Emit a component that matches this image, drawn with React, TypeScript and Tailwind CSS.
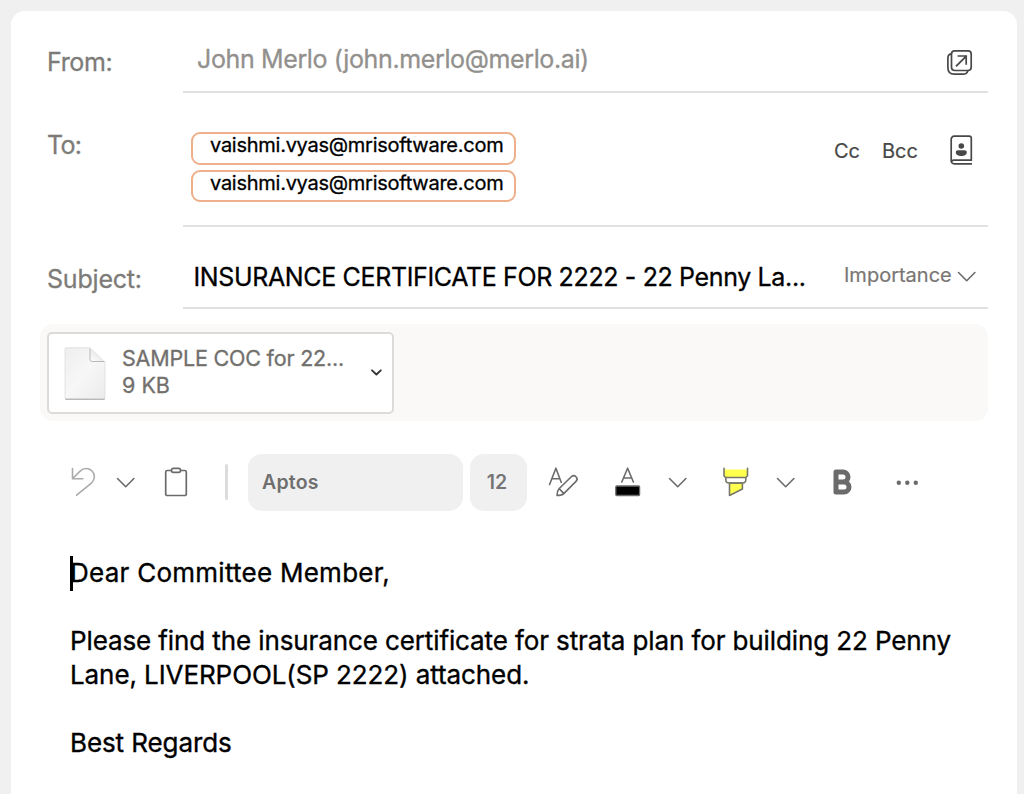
import type { ReactNode } from 'react'

type FieldRowProps = {
  label: string
  labelClass: string
  className: string
  children: ReactNode
}

const recipients = ['vaishmi.vyas@mrisoftware.com', 'vaishmi.vyas@mrisoftware.com']

function FieldRow({ label, labelClass, className, children }: FieldRowProps) {
  return (
    <div className={`flex ${className}`}>
      <div className={`w-[136px] shrink-0 text-[25px] leading-[30px] text-[#7d7b78] [-webkit-text-stroke:0.3px] ${labelClass}`}>{label}</div>
      <div className="flex w-[805px] border-b-2 border-[#e1e1e1]">{children}</div>
    </div>
  )
}

function Chevron({ className = '' }: { className?: string }) {
  return (
    <svg className={className} width="20" height="12" viewBox="0 0 20 12" fill="none" stroke="#6b6b6b" strokeWidth="1.6" strokeLinecap="round" strokeLinejoin="round">
      <path d="M1.5 1.5 9.700 9.700l8.200-8.200" />
    </svg>
  )
}

function PopOutIcon({ className = '' }: { className?: string }) {
  return (
    <svg className={className} width="27" height="27" viewBox="0 0 27 27" fill="none" stroke="#484848" strokeWidth="1.7" strokeLinecap="round" strokeLinejoin="round">
      <rect x="4.500" y="1.800" width="19.700" height="19.700" rx="3.200" />
      <path d="M4.200 4.800C2 5.200.9 6.600.9 9v9.500c0 4.200 2.100 6.700 6.400 6.700h8.700c2.600 0 4.300-1.300 4.900-3.500" />
      <path d="M9.600 16.700 19 7.300M11.400 7h7.800v7.800" strokeLinecap="square" strokeLinejoin="miter" />
    </svg>
  )
}

function ContactsIcon({ className = '' }: { className?: string }) {
  return (
    <svg className={className} width="24" height="31" viewBox="0 0 24 31" fill="none" stroke="#484848" strokeWidth="1.700">
      <path d="M22 28.900H4.200a3 3 0 0 1-3-3V4.200a3 3 0 0 1 3-3h14.900a2.200 2.200 0 0 1 2.200 2.200v21.800H4a2.400 2.400 0 0 0-2.400 1.300" />
      <circle cx="11.300" cy="11" r="2.800" fill="#484848" stroke="none" />
      <path d="M5.800 17.300c0-1.300.9-2 2.200-2h6.600c1.300 0 2.200.7 2.200 2 0 2.600-2.400 3.700-5.500 3.700s-5.500-1.100-5.500-3.700Z" fill="#484848" stroke="none" />
    </svg>
  )
}

function FileIcon() {
  return (
    <svg className="ml-[14px] mt-[12px] shrink-0" width="44" height="56" viewBox="0 0 44 56">
      <defs>
        <linearGradient id="page" x1="0" y1="0" x2="1" y2="1">
          <stop offset="0" stopColor="#eeeeee" />
          <stop offset="0.500" stopColor="#f7f7f7" />
          <stop offset="1" stopColor="#ebebeb" />
        </linearGradient>
        <linearGradient id="fold" x1="0" y1="1" x2="0.600" y2="0.300">
          <stop offset="0" stopColor="#ffffff" />
          <stop offset="1" stopColor="#e4e4e4" />
        </linearGradient>
      </defs>
      <path d="M3 2h24l15 15v35.500a1.500 1.500 0 0 1-1.500 1.500h-37A1.500 1.500 0 0 1 2 52.500V3a1 1 0 0 1 1-1Z" fill="#b8b8b8" />
      <path d="M3 1.800h24L42 16v35a1.500 1.500 0 0 1-1.500 1.500h-37A1.500 1.500 0 0 1 2 51V2.800a1 1 0 0 1 1-1Z" fill="url(#page)" stroke="#dadada" strokeWidth="0.700" />
      <path d="M27 2V13.500a2 2 0 0 0 2 2H42Z" fill="url(#fold)" />
      <path d="M27 2.500V13.500a2 2 0 0 0 2 2H41.500" fill="none" stroke="#b9b9b9" strokeWidth="1" />
    </svg>
  )
}

function Toolbar() {
  return (
    <div className="mt-[33px] flex h-[57px] items-center pl-[23px]">
      {/* Undo */}
      <svg className="-mt-[1px]" width="26" height="32" viewBox="0 0 26 32" fill="none" stroke="#ababab" strokeWidth="1.600" strokeLinecap="round" strokeLinejoin="round">
        <path d="M2.500 2.500v10.200h10.300M2.900 12.300l7.200-7.200c3.800-3.800 9.200-3.300 12.200.1 3 3.500 2.700 8.300-.6 11.600L6.600 29.200" />
      </svg>
      <Chevron className="ml-[20px]" />

      {/* Paste */}
      <svg className="-mt-[1px] ml-[28px]" width="24" height="32" viewBox="0 0 24 32" fill="none" stroke="#6b6b6b" strokeWidth="1.700">
        <path d="M7.500 4.500H3.200a1.500 1.500 0 0 0-1.500 1.500v22a1.500 1.500 0 0 0 1.500 1.500h17.600a1.500 1.500 0 0 0 1.500-1.500V6a1.500 1.500 0 0 0-1.500-1.500h-4.300" />
        <rect x="7.500" y="2.300" width="9" height="4" rx="1.800" />
      </svg>

      <div className="-mt-[1px] ml-[37px] h-[36px] w-[3px] rounded-full bg-[#dcdcdc]" />
      <div className="ml-[20px] flex h-[57px] w-[215px] items-center rounded-[14px] bg-[#f0f0f0] pl-[14px] text-[19.500px] font-semibold tracking-[0.200px] text-[#6f6f6f]">Aptos</div>
      <div className="ml-[7px] flex h-[57px] w-[57px] items-center justify-center rounded-[14px] bg-[#f0f0f0] pr-[3px] text-[19.500px] font-semibold text-[#757575]">12</div>

      {/* Text styles */}
      <svg className="-mt-[1px] ml-[21px]" width="32" height="32" viewBox="0 0 32 32" fill="none" stroke="#6b6b6b" strokeWidth="1.600" strokeLinecap="round" strokeLinejoin="round">
        <path d="M1.600 18.500 7.900 2.200l5.300 14M4.200 12.800h7.500" />
        <path d="M9 29.500c.1-3 .5-5 2-6.700L23.300 10.700a3.300 3.300 0 0 1 4.700 4.700L15.800 27.600c-1.500 1.500-3.800 1.900-6.800 1.900ZM11.300 22.700l4.400 4.700" />
      </svg>

      {/* Font colour */}
      <svg className="-mt-[1px] ml-[34px]" width="28" height="32" viewBox="0 0 28 32" fill="none" stroke="#6b6b6b" strokeWidth="1.600" strokeLinecap="round" strokeLinejoin="round">
        <path d="M7.800 16 13.600 2.200 19.400 16M9.700 12h7.800" />
        <rect x="1.800" y="20" width="23.800" height="9.500" rx="1" fill="#000" strokeWidth="1.300" />
      </svg>
      <Chevron className="ml-[26px]" />

      {/* Highlight */}
      <svg className="-mt-[1px] ml-[34px]" width="28" height="32" viewBox="0 0 28 32" fill="none" stroke="#77776b" strokeWidth="1.600" strokeLinecap="round" strokeLinejoin="round">
        <path d="M2 3.500h23.500V11H2Z" fill="#ffff4d" stroke="none" />
        <path d="M7.500 17h12.900v6L7.500 29.500Z" fill="#ffff4d" />
        <path d="M2 2.300v7.500L3.500 11.500h20.400l1.600-1.700V2.300M3.800 11.500v2.200c0 2 1.200 3.300 3.300 3.300h13.400c2.100 0 3.300-1.300 3.300-3.300v-2.200" />
      </svg>
      <Chevron className="ml-[26px]" />

      {/* Bold */}
      <svg className="-mt-[1px] ml-[36px]" width="22" height="28" viewBox="0 0 22 28" fill="none" stroke="#6b6b6b" strokeWidth="5" strokeLinecap="round" strokeLinejoin="round">
        <path d="M4 4v20h8a4.800 4.800 0 0 0 0-10H4M4 4h7a5 5 0 0 1 0 10" />
      </svg>

      {/* More */}
      <svg className="ml-[42px]" width="24" height="6" viewBox="0 0 24 6" fill="#6b6b6b">
        <circle cx="2.800" cy="2.800" r="2.200" />
        <circle cx="11.300" cy="2.800" r="2.200" />
        <circle cx="19.800" cy="2.800" r="2.200" />
      </svg>
    </div>
  )
}

export default function App() {
  return (
    <div className="h-[794px] w-[1024px] overflow-hidden bg-[#f0f0f0] pl-[11px] pt-[11px] font-['Inter',sans-serif]">
      <div className="h-[800px] w-[1006px] rounded-[14px] bg-white pl-[36px] whitespace-nowrap">
        <FieldRow label="From:" labelClass="pt-[36px] tracking-[-0.350px]" className="h-[82px]">
          <div className="w-[764px] pl-[14px] pt-[33px] text-[25px] leading-[30px] tracking-[-0.370px] text-[#92908d] [-webkit-text-stroke:0.3px]">
            <span>John Merlo (john.merlo@merlo.ai)</span>
          </div>
          <PopOutIcon className="mt-[38px]" />
        </FieldRow>

        <FieldRow label="To:" labelClass="pt-[37px] tracking-[-0.700px]" className="h-[134px]">
          <div className="flex w-[651px] flex-col items-start gap-[5px] pl-[8px] pt-[39px]">
            {recipients.map((email, i) => (
              <div key={i} className="h-[32.500px] w-[324.500px] rounded-[9px] border-2 border-[#eeb08a] pl-[17px] text-[20px] leading-[23px] tracking-[-0.260px] text-black [-webkit-text-stroke:0.3px]">
                {email}
              </div>
            ))}
          </div>
          <span className="w-[48px] pt-[46px] text-[20px] leading-[24px] text-[#484848] [-webkit-text-stroke:0.2px]">Cc</span>
          <span className="w-[68px] pt-[46px] text-[20px] leading-[24px] text-[#484848] [-webkit-text-stroke:0.2px]">Bcc</span>
          <ContactsIcon className="mt-[42px]" />
        </FieldRow>

        <FieldRow label="Subject:" labelClass="pt-[37px] tracking-[-0.200px]" className="h-[82px]">
          <div className="w-[661px] pl-[10.500px] pt-[35px] text-[25px] leading-[30px] tracking-[-0.360px] text-black [-webkit-text-stroke:0.3px]">
            <span>INSURANCE CERTIFICATE FOR 2222 - 22 Penny La...</span>
          </div>
          <div className="w-[113px] pt-[36px] text-[20px] leading-[24px] text-[#797673] [-webkit-text-stroke:0.2px]">Importance</div>
          <Chevron className="mt-[44px]" />
        </FieldRow>

        {/* Attachments */}
        <div className="-ml-[7px] mt-[15px] h-[97px] w-[948px] rounded-[13px] bg-[#faf9f8] pl-[7px] pt-[8px]">
          <div className="flex h-[82px] w-[347px] rounded-[5px] border-2 border-[#dcdbda] bg-white">
            <FileIcon />
            <div className="w-[241px] pl-[15px] pt-[11px] text-[21.500px] leading-[27px] text-[#72706d] [-webkit-text-stroke:0.3px]">
              <div className="tracking-[-0.200px]">SAMPLE COC for 22...</div>
              <div>9 KB</div>
            </div>
            <svg className="ml-[22px] mt-[34px]" width="12" height="10" viewBox="0 0 12 10" fill="none" stroke="#303030" strokeWidth="1.800" strokeLinecap="round" strokeLinejoin="round">
              <path d="M2 2.300 6.400 6.500l4.400-4.200" />
            </svg>
          </div>
        </div>

        <Toolbar />

        {/* Message body */}
        <div className="relative mt-[45px] pl-[23px] text-[26px] leading-[34px] text-black [-webkit-text-stroke:0.35px]">
          <div className="absolute left-[23px] top-0 h-[35px] w-[3px] bg-black" />
          <p className="mb-[34px] tracking-[0.260px]">Dear Committee Member,</p>
          <p className="tracking-[-0.110px]">Please find the insurance certificate for strata plan for building 22 Penny</p>
          <p className="mb-[34px] tracking-[-0.090px]">Lane, LIVERPOOL(SP 2222) attached.</p>
          <p className="tracking-[-0.090px]">Best Regards</p>
        </div>
      </div>
    </div>
  )
}
